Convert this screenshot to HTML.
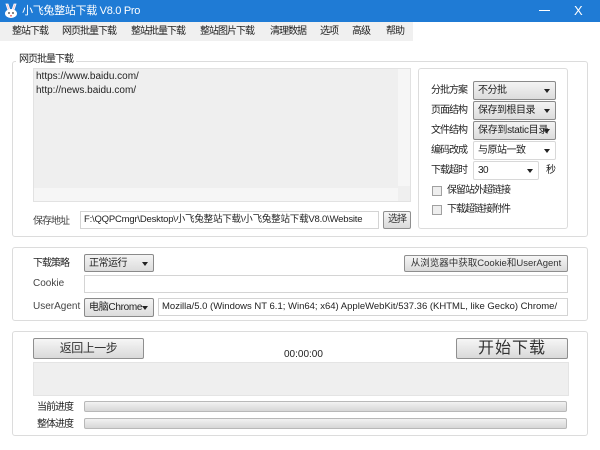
<!DOCTYPE html>
<html><head><meta charset="utf-8"><style>
*{margin:0;padding:0;box-sizing:border-box}
body{width:600px;height:450px;background:#fff;position:relative;overflow:hidden;font-family:"Liberation Sans","Noto Sans CJK SC",sans-serif;font-size:10px;color:#222}
.a{position:absolute;white-space:nowrap}
.c{letter-spacing:-1px}
.grp{position:absolute;border:1px solid #dcdcdc;border-radius:3px;background:#fff}
.inp{position:absolute;border:1px solid #d4d4d4;background:#fff;padding:1px 3px;line-height:14px;font-size:9.5px;overflow:hidden;white-space:nowrap}
.dd{position:absolute;border:1px solid #8a8a8a;border-radius:2px;background:linear-gradient(#f4f4f4,#dcdcdc);padding:1px 4px;line-height:15px;font-size:10px;white-space:nowrap;letter-spacing:-0.5px;overflow:hidden}
.dd.w{background:#fff;border-color:#d8d8d8}
.dd:after{content:"";position:absolute;right:5px;top:7px;border:3px solid transparent;border-top:4px solid #222;border-bottom:0}
.btn{position:absolute;border:1px solid #8f8f8f;border-radius:2px;background:linear-gradient(#f6f6f6,#d9d9d9);text-align:center;white-space:nowrap;color:#333}
.bar{position:absolute;left:84px;width:483px;height:11px;border:1px solid #b8b8b8;border-radius:2px;background:linear-gradient(#f2f2f2,#d6d6d6)}
.cb{position:absolute;width:10px;height:10px;border:1px solid #a0a0a0;background:#eee}
</style></head><body>
<div class="a" style="left:0;top:0;width:600px;height:22px;background:#1f7bd5"></div>
<svg class="a" style="left:3px;top:3px" width="16" height="16" viewBox="0 0 16 16"><path d="M3 1 L5 7 L7 7 L5 1Z M13 1 L11 7 L9 7 L11 1Z" fill="#f3c7d3" stroke="#fff" stroke-width="0.8"/><ellipse cx="8" cy="10.5" rx="6" ry="4.5" fill="#fff"/><circle cx="6" cy="10" r="0.9" fill="#333"/><circle cx="10" cy="10" r="0.9" fill="#333"/><rect x="7.3" y="12" width="1.4" height="1.5" fill="#e44"/></svg>
<div class="a" style="left:22px;top:4px;color:#fff;font-size:11px;line-height:14px;letter-spacing:-0.3px">小飞兔整站下载 V8.0 Pro</div>
<div class="a" style="left:539px;top:10px;width:11px;height:1px;background:#fff"></div>
<div class="a" style="left:574px;top:3px;color:#fff;font-size:13px;line-height:16px">X</div>
<div class="a" style="left:0;top:22px;width:413px;height:19px;background:#f0f0f0"></div>
<div class="a c" style="left:12px;top:25px;line-height:13px">整站下载</div>
<div class="a c" style="left:62px;top:25px;line-height:13px">网页批量下载</div>
<div class="a c" style="left:131px;top:25px;line-height:13px">整站批量下载</div>
<div class="a c" style="left:200px;top:25px;line-height:13px">整站图片下载</div>
<div class="a c" style="left:270px;top:25px;line-height:13px">清理数据</div>
<div class="a c" style="left:320px;top:25px;line-height:13px">选项</div>
<div class="a c" style="left:352px;top:25px;line-height:13px">高级</div>
<div class="a c" style="left:386px;top:25px;line-height:13px">帮助</div>

<div class="grp" style="left:12px;top:61px;width:576px;height:176px"></div>
<div class="a c" style="left:16px;top:53px;background:#fff;padding:0 3px;line-height:14px">网页批量下载</div>
<div class="a" style="left:33px;top:68px;width:378px;height:134px;background:#efefef;border:1px solid #e2e2e2"></div>
<div class="a" style="left:398px;top:69px;width:12px;height:117px;background:#f6f6f6"></div>
<div class="a" style="left:34px;top:188px;width:364px;height:13px;background:#f6f6f6"></div>
<div class="a" style="left:36px;top:70px;line-height:14px">https://www.baidu.com/<br>http://news.baidu.com/</div>
<div class="a c" style="left:33px;top:215px;color:#444;line-height:13px">保存地址</div>
<div class="inp" style="left:80px;top:211px;width:299px;height:18px;letter-spacing:-0.2px">F:\QQPCmgr\Desktop\小飞兔整站下载\小飞兔整站下载V8.0\Website</div>
<div class="btn c" style="left:383px;top:211px;width:28px;height:18px;line-height:15px">选择</div>
<div class="grp" style="left:418px;top:68px;width:150px;height:161px"></div>
<div class="a c" style="left:431px;top:84px;line-height:13px">分批方案</div>
<div class="dd" style="left:473px;top:81px;width:83px;height:19px">不分批</div>
<div class="a c" style="left:431px;top:104px;line-height:13px">页面结构</div>
<div class="dd" style="left:473px;top:101px;width:83px;height:19px">保存到根目录</div>
<div class="a c" style="left:431px;top:124px;line-height:13px">文件结构</div>
<div class="dd" style="left:473px;top:121px;width:83px;height:19px;letter-spacing:-0.3px">保存到static目录</div>
<div class="a c" style="left:431px;top:144px;line-height:13px">编码改成</div>
<div class="dd w" style="left:473px;top:141px;width:83px;height:19px">与原站一致</div>
<div class="a c" style="left:431px;top:164px;line-height:13px">下载超时</div>
<div class="dd w" style="left:473px;top:161px;width:66px;height:19px">30</div>
<div class="a" style="left:546px;top:164px;line-height:13px">秒</div>
<div class="cb" style="left:432px;top:186px"></div>
<div class="a c" style="left:447px;top:184px;line-height:13px">保留站外超链接</div>
<div class="cb" style="left:432px;top:205px"></div>
<div class="a c" style="left:447px;top:203px;line-height:13px">下载超链接附件</div>

<div class="grp" style="left:12px;top:247px;width:576px;height:74px"></div>
<div class="a c" style="left:33px;top:257px;line-height:13px">下载策略</div>
<div class="dd" style="left:84px;top:254px;width:70px;height:18px">正常运行</div>
<div class="btn" style="left:404px;top:255px;width:164px;height:17px;line-height:15px;font-size:9.5px">从浏览器中获取Cookie和UserAgent</div>
<div class="a" style="left:33px;top:277px;line-height:13px;color:#444">Cookie</div>
<div class="inp" style="left:84px;top:275px;width:484px;height:18px"></div>
<div class="a" style="left:33px;top:300px;line-height:13px;color:#444">UserAgent</div>
<div class="dd" style="left:84px;top:298px;width:70px;height:19px;letter-spacing:-0.3px">电脑Chrome</div>
<div class="inp" style="left:158px;top:298px;width:410px;height:18px">Mozilla/5.0 (Windows NT 6.1; Win64; x64) AppleWebKit/537.36 (KHTML, like Gecko) Chrome/</div>

<div class="grp" style="left:12px;top:331px;width:576px;height:105px"></div>
<div class="btn" style="left:33px;top:338px;width:111px;height:21px;line-height:19px;font-size:12px;letter-spacing:-0.5px">返回上一步</div>
<div class="a" style="left:284px;top:348px;line-height:13px">00:00:00</div>
<div class="btn" style="left:456px;top:338px;width:112px;height:21px;line-height:19px;font-size:16px;letter-spacing:1px">开始下载</div>
<div class="a" style="left:33px;top:362px;width:536px;height:34px;background:#efefef;border:1px solid #e4e4e4"></div>
<div class="a c" style="left:37px;top:401px;line-height:13px">当前进度</div>
<div class="bar" style="top:401px"></div>
<div class="a c" style="left:37px;top:418px;line-height:13px">整体进度</div>
<div class="bar" style="top:418px"></div>
</body></html>
